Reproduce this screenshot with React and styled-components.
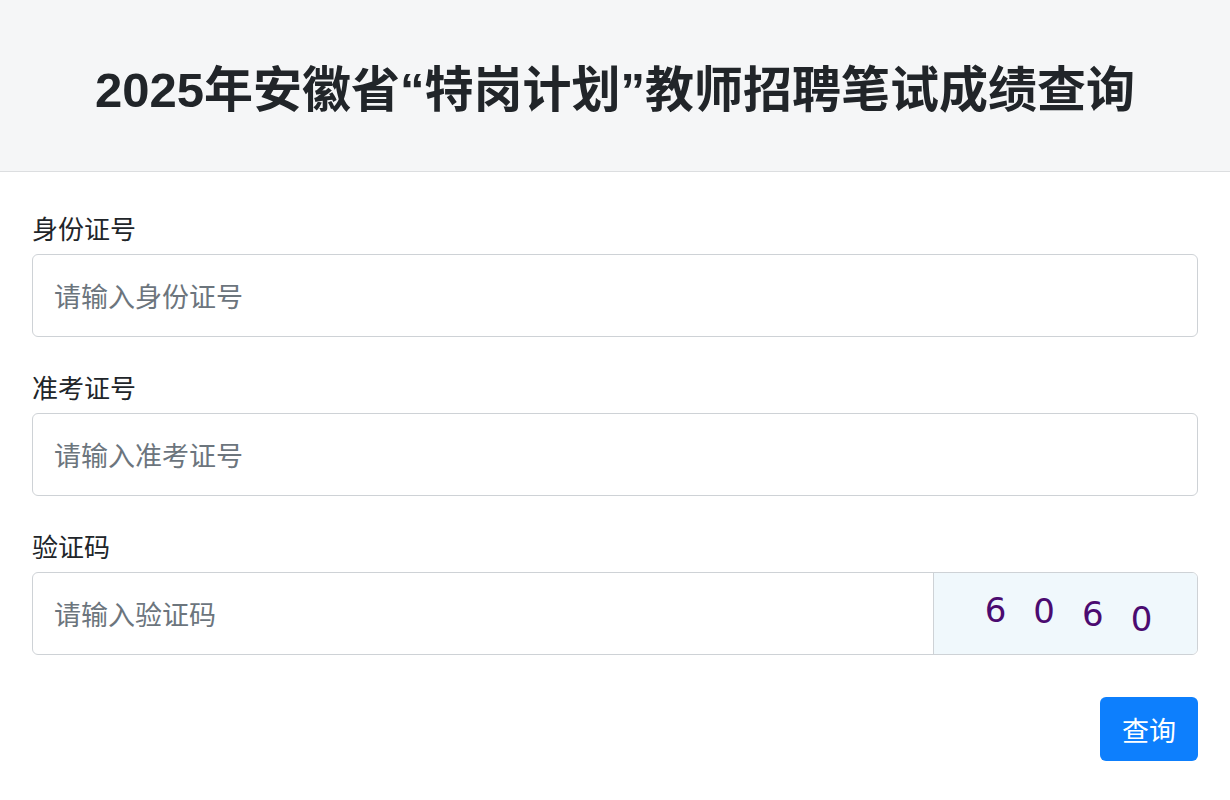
import React, { useState } from "react";
import styled, { createGlobalStyle } from "styled-components";

const GlobalStyle = createGlobalStyle`
  * { box-sizing: border-box; }
  body {
    margin: 0;
    background: #fff;
    font-family: "Noto Sans CJK SC", "Noto Sans", sans-serif;
    color: #212529;
  }
`;

const Header = styled.header`
  height: 172px;
  background: #f5f6f7;
  border-bottom: 1px solid #dcdee0;
  display: flex;
  align-items: center;
  justify-content: center;
`;

// digits and curly quotes take the Latin face, the rest falls through to CJK
const Title = styled.h1`
  margin: 0;
  font-family: "Liberation Sans", "Noto Sans CJK SC", sans-serif;
  font-size: 49px;
  font-weight: 700;
  color: #212529;
`;

const Form = styled.form`
  padding: 38px 32px 0;
  display: flex;
  flex-direction: column;
  gap: 32px;
`;

const Field = styled.div`
  display: flex;
  flex-direction: column;
  gap: 8px;
`;

const Label = styled.label`
  font-size: 26px;
  line-height: 36px;
  color: #212529;
`;

const Box = styled.div`
  display: flex;
  height: 83px;
  border: 1px solid #ced2d6;
  border-radius: 6px;
  overflow: hidden;
  background: #fff;
`;

const Input = styled.input`
  flex: 1;
  min-width: 0;
  border: none;
  outline: none;
  padding: 0 21px;
  font-family: inherit;
  font-size: 27px;
  color: #212529;
  background: transparent;
  &::placeholder { color: #6c757d; }
`;

const Captcha = styled.div`
  width: 264px;
  border-left: 1px solid #ced2d6;
  background: #f0f8fc;
  display: flex;
  align-items: center;
  justify-content: center;
  gap: 27px;
  padding-left: 6px;
`;

const Digit = styled.span`
  font-family: "DejaVu Sans", sans-serif;
  font-size: 34px;
  color: #4b0b70;
  transform: translateY(${(p) => p.$dy}px);
`;

const Actions = styled.div`
  display: flex;
  justify-content: flex-end;
  margin-top: 10px;
`;

const Button = styled.button`
  width: 98px;
  height: 64px;
  border: none;
  border-radius: 6px;
  background: #0d7ffd;
  color: #fff;
  font-family: inherit;
  font-size: 27px;
  cursor: pointer;
`;

const code = [
  { d: "6", dy: -4 },
  { d: "0", dy: -3 },
  { d: "6", dy: 0 },
  { d: "0", dy: 5 },
];

export default function App() {
  const [idNo, setIdNo] = useState("");
  const [ticket, setTicket] = useState("");
  const [verify, setVerify] = useState("");

  return (
    <>
      <GlobalStyle />
      <Header>
        <Title>2025年安徽省“特岗计划”教师招聘笔试成绩查询</Title>
      </Header>
      <Form onSubmit={(e) => e.preventDefault()}>
        <Field>
          <Label>身份证号</Label>
          <Box>
            <Input placeholder="请输入身份证号" value={idNo} onChange={(e) => setIdNo(e.target.value)} />
          </Box>
        </Field>
        <Field>
          <Label>准考证号</Label>
          <Box>
            <Input placeholder="请输入准考证号" value={ticket} onChange={(e) => setTicket(e.target.value)} />
          </Box>
        </Field>
        <Field>
          <Label>验证码</Label>
          <Box>
            <Input placeholder="请输入验证码" value={verify} onChange={(e) => setVerify(e.target.value)} />
            <Captcha>
              {code.map((c, i) => (
                <Digit key={i} $dy={c.dy}>{c.d}</Digit>
              ))}
            </Captcha>
          </Box>
        </Field>
        <Actions>
          <Button type="submit">查询</Button>
        </Actions>
      </Form>
    </>
  );
}
